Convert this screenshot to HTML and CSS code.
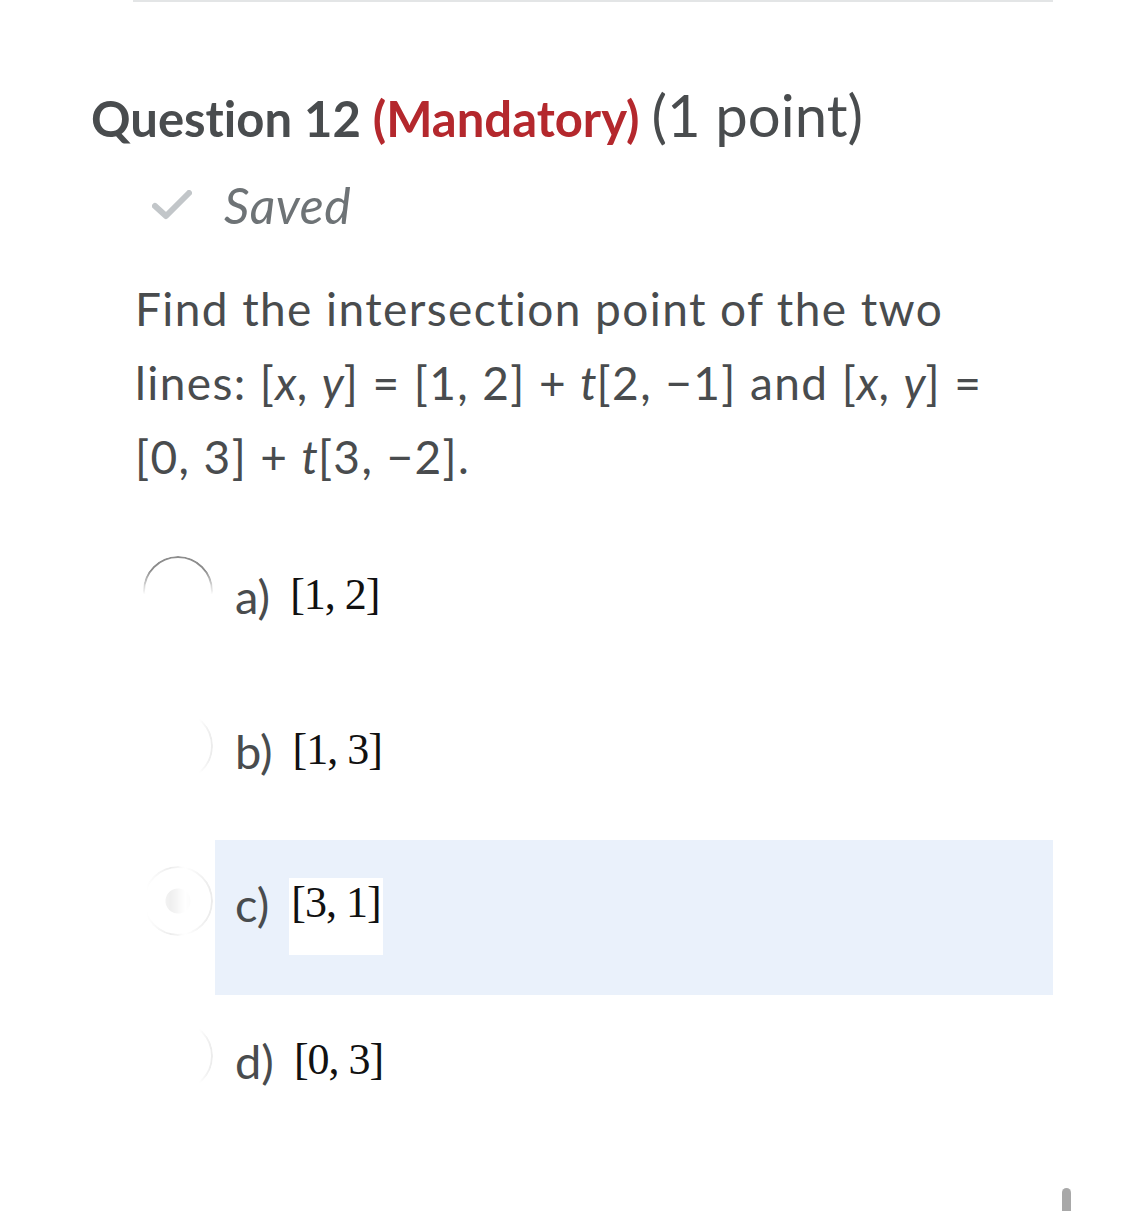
FILE: index.html
```html
<!DOCTYPE html>
<html lang="en">
<head>
    <meta charset="UTF-8">
    <meta name="viewport" content="width=device-width, initial-scale=1.0">
    <title>Question 12</title>
    <link rel="stylesheet" href="styles.css">
</head>
<body>
    <div class="quiz">
        <div class="divider"></div>

        <h2 class="q-title">
            Question 12 <span class="mandatory">(Mandatory)</span> <span class="points">(1 point)</span>
        </h2>

        <div class="saved">
            <svg class="check" viewBox="0 0 40 30" width="40" height="30">
                <path d="M3 16 L14 26 L37 3" fill="none" stroke="#c2c6c9" stroke-width="6" stroke-linecap="round" stroke-linejoin="round"/>
            </svg>
            <span>Saved</span>
        </div>

        <p class="q-text">
            Find the intersection point of the two lines: [<i>x</i>, <i>y</i>] = [1, 2] + <i>t</i>[2, &minus;1] and [<i>x</i>, <i>y</i>] = [0, 3] + <i>t</i>[3, &minus;2].
        </p>

        <div class="options">
            <div class="option">
                <div class="radio-col"><span class="radio first"></span></div>
                <div class="label">a) <span class="answer">[1, 2]</span></div>
            </div>
            <div class="option">
                <div class="radio-col"><span class="radio faded"></span></div>
                <div class="label">b) <span class="answer">[1, 3]</span></div>
            </div>
            <div class="option selected">
                <div class="radio-col"><span class="radio faded checked"></span></div>
                <div class="label">c) <span class="answer boxed">[3, 1]</span></div>
            </div>
            <div class="option">
                <div class="radio-col"><span class="radio faded"></span></div>
                <div class="label">d) <span class="answer">[0, 3]</span></div>
            </div>
        </div>
    </div>

    <div class="scroll-thumb"></div>
</body>
</html>
```

FILE: styles.css
```css
body {
    font-family: Lato, "Noto Sans", sans-serif;
    font-variant-ligatures: none;
    margin: 0;
    padding: 0;
    background-color: #fff;
    color: #494c4e;
}
.quiz {
    width: 920px;
    margin-left: 133px;
}
.divider {
    height: 2px;
    background-color: #e3e5e6;
}
.q-title {
    margin: 83px 0 0 -42px;
    font-size: 49px;
    font-weight: 700;
    line-height: 60px;
    white-space: nowrap;
}
.mandatory {
    color: #b4282d;
}
.points {
    font-weight: 400;
    font-size: 58px;
}
.saved {
    display: flex;
    align-items: center;
    gap: 32px;
    margin: 26px 0 0 19px;
    height: 62px;
}
.saved span {
    font-style: italic;
    font-size: 50px;
    letter-spacing: 0.5px;
    color: #6e7376;
}
.q-text {
    margin: 36px 0 0 2px;
    font-size: 46px;
    letter-spacing: 1.4px;
    line-height: 74px;
    width: 910px;
}
.q-text i {
    font-style: italic;
    letter-spacing: 0;
}
.options {
    margin-top: 36px;
}
.option {
    display: flex;
    height: 155px;
}
.radio-col {
    width: 82px;
    flex: none;
    padding: 26px 0 0 10px;
    box-sizing: border-box;
}
.radio {
    display: block;
    width: 70px;
    height: 70px;
    box-sizing: border-box;
    border-radius: 50%;
    border: 2px solid #8c8c8c;
}
.radio.first {
    -webkit-mask-image: linear-gradient(to bottom, #000 20%, transparent 55%);
    mask-image: linear-gradient(to bottom, #000 20%, transparent 55%);
}
.radio.faded {
    border-color: #ececec;
    -webkit-mask-image: linear-gradient(to right, transparent 80%, #000 97%);
    mask-image: linear-gradient(to right, transparent 80%, #000 97%);
}
.radio.checked {
    background: radial-gradient(circle, #efefef 0 12px, transparent 13px);
    -webkit-mask-image: linear-gradient(to right, transparent 5%, #000 40%, transparent 60%, #000 95%);
    mask-image: linear-gradient(to right, transparent 5%, #000 40%, transparent 60%, #000 95%);
}
.label {
    flex: 1;
    padding: 40px 0 0 20px;
    font-size: 47px;
    line-height: 52px;
}
.option.selected .label {
    background-color: #eaf1fb;
    padding-top: 38px;
}
.answer {
    display: inline-block;
    vertical-align: top;
    font-family: "Liberation Serif", "Times New Roman", serif;
    font-size: 44px;
    letter-spacing: -1px;
    line-height: 50px;
    color: #111;
    margin-left: 8px;
}
.answer.boxed {
    background-color: #fff;
    height: 77px;
    padding: 0 2px;
}
.scroll-thumb {
    position: fixed;
    right: 54px;
    bottom: 0;
    width: 9px;
    height: 23px;
    border-radius: 5px 5px 0 0;
    background-color: #a8a8a8;
}
```
